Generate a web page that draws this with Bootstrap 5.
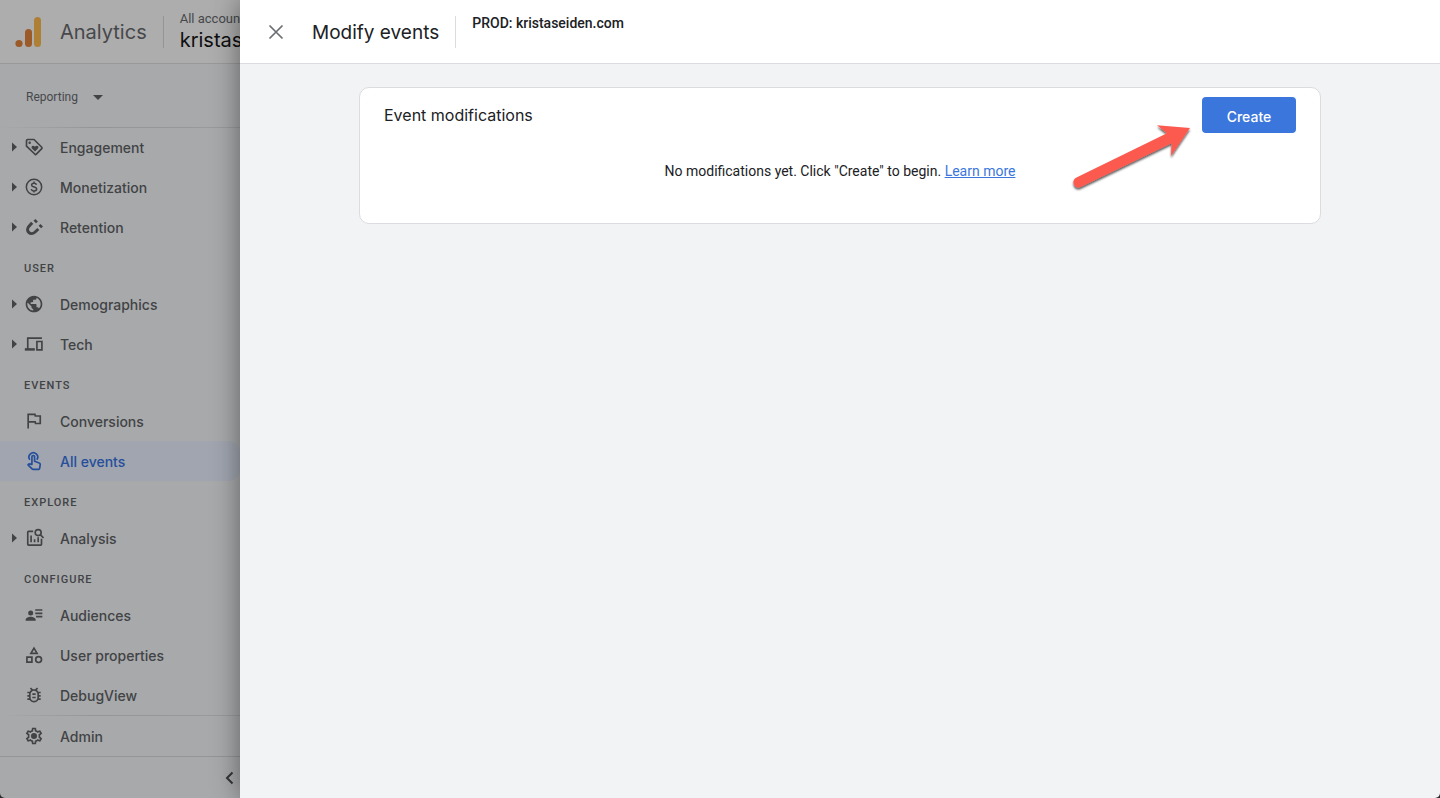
<!DOCTYPE html>
<html lang="en">
<head>
<meta charset="utf-8">
<meta name="viewport" content="width=device-width, initial-scale=1">
<title>Analytics - Modify events</title>
<link href="https://cdn.jsdelivr.net/npm/bootstrap@5.3.0/dist/css/bootstrap.min.css" rel="stylesheet">
<style>
  body { background: #2b2b2b; font-family: Roboto, "Liberation Sans", sans-serif; font-size: 14px; color: #202124; }
  .app-shell { min-height: 100vh; border-radius: 0 0 5px 5px; }
  .brand-font { font-family: Inter, Roboto, sans-serif; }

  /* dimmed navigation behind the drawer */
  .side-nav { width: 240px; background: #a8a9ab; color: #414345; }
  .side-top { height: 64px; background: #adadad; border-bottom: 1px solid #98999b; padding-left: 14px; }
  .product-name { font-size: 20px; line-height: 32px; color: #46484b; margin-left: 17px; }
  .top-rule { width: 1px; height: 32px; background: #939495; margin: 0 16px; }
  .acct-label { font-size: 13px; line-height: 16px; color: #46484b; }
  .acct-name { font-size: 20px; line-height: 26px; color: #0e0e0f; }
  .mode-switch { height: 63px; padding: 3px 26px 0; font-size: 12px; color: #46484b; background: none; border: 0; gap: 15px; }
  .fade-rule { height: 1px; background: linear-gradient(90deg, #a8a9ab, #949597 40%, #999a9c); }
  .nav-item-row { height: 40px; padding-left: 10px; font-size: 14px; font-weight: 500; color: #414345; text-decoration: none; }
  .nav-item-row:hover { color: #222; }
  .nav-item-row.is-current { background: #a0a5af; color: #254e9b; border-radius: 0 12px 12px 0; }
  .twisty { width: 14px; height: 10px; }
  .glyph { width: 20px; height: 20px; margin-right: 16px; }
  .group-title { height: 37px; padding: 14px 24px 0; font-family: Roboto, "Liberation Sans", sans-serif; font-size: 11px; line-height: 16px; font-weight: 500; letter-spacing: 1px; color: #414345; margin: 0; }
  .nav-end { border-top: 1px solid #949597; min-height: 41px; padding-right: 3px; }
  .plain-btn { border: 0; background: none; padding: 0; line-height: 0; color: inherit; }

  .drawer { background: #f1f3f4; box-shadow: 0 0 26px rgba(0,0,0,.45); min-width: 0; }
  .drawer-top { height: 64px; background: #fff; border-bottom: 1px solid #dadce0; padding-left: 26px; }
  .drawer-title { font-size: 19px; line-height: 28px; font-weight: 400; margin: 2px 0 0 26px; }
  .drawer-rule { width: 1px; height: 32px; background: #dadce0; margin: 0 16px; }
  .property-name { font-weight: 500; line-height: 20px; margin-bottom: 18px; }
  .drawer-body { padding: 23px 24px; }
  .panel { max-width: 962px; min-height: 137px; background: #fff; border: 1px solid #dadce0; border-radius: 10px; }
  .panel-head { padding: 9px 24px 0; }
  .panel-title { font-size: 16px; line-height: 24px; font-weight: 400; }
  .create-btn { width: 94px; height: 36px; background: #3b76dc; color: #fff; border-radius: 4px; font-size: 14px; font-weight: 500; padding: 2px 0 0; }
  .create-btn:hover { background: #2f66c6; color: #fff; }
  .learn-link { color: #3b76dc; }
  .pointer-arrow { right: 120px; top: 32px; width: 130px; height: 80px; pointer-events: none; }
</style>
</head>
<body>
<div class="app-shell d-flex overflow-hidden">
  <nav class="side-nav flex-shrink-0 d-flex flex-column overflow-hidden" aria-label="Analytics">
    <header class="side-top d-flex align-items-center flex-shrink-0 text-nowrap">
      <svg class="flex-shrink-0" width="29" height="32" viewBox="0 0 29 32" aria-hidden="true">
        <rect x="20" y="1" width="7" height="30" rx="3.5" fill="#ad8036"/>
        <rect x="11" y="13" width="7" height="18" rx="3.5" fill="#9c5a28"/>
        <circle cx="5" cy="27.500" r="3.600" fill="#9c5a28"/>
      </svg>
      <span class="product-name brand-font">Analytics</span>
      <span class="top-rule flex-shrink-0"></span>
      <div><div class="acct-label">All account</div><div class="acct-name brand-font">kristas</div></div>
    </header>
    <button class="mode-switch d-flex align-items-center flex-shrink-0" type="button">Reporting
      <svg width="10" height="5" viewBox="0 0 10 5" aria-hidden="true"><path d="M0 0h10L5 5z" fill="#414345"/></svg>
    </button>
    <div class="brand-font">
      <div class="position-relative"><div class="fade-rule position-absolute top-0 w-100"></div></div>
      <a href="#" class="nav-item-row d-flex align-items-center"><svg class="twisty" viewBox="0 0 14 10"><path d="M2 .5 7 5 2 9.500z" fill="currentColor"/></svg>
        <svg class="glyph" viewBox="0 0 24 24"><path d="M3 4.500V11l10.200 9.700q.8.700 1.600-.1l6.500-6.700q.8-.8 0-1.600L12 3H4.500Q3 3 3 4.500z" fill="none" stroke="currentColor" stroke-width="2" stroke-linejoin="round"/><circle cx="6.800" cy="6.800" r="1.500" fill="currentColor"/><path d="M13.200 17.500 9.600 13.800c-1.200-1.300-.4-3.300 1.400-3.300 1 0 1.700.5 2.200 1.200.5-.7 1.200-1.200 2.200-1.200 1.800 0 2.600 2 1.400 3.300z" fill="currentColor"/></svg>Engagement</a>
      <a href="#" class="nav-item-row d-flex align-items-center"><svg class="twisty" viewBox="0 0 14 10"><path d="M2 .5 7 5 2 9.500z" fill="currentColor"/></svg>
        <svg class="glyph" viewBox="0 0 24 24" fill="none" stroke="currentColor" stroke-width="1.800"><circle cx="12" cy="12" r="9.200"/><path d="M15 9.300c-.3-1.200-1.400-1.900-3-1.900s-2.900.8-2.900 2.100c0 1.500 1.300 2 3 2.400s3.100 1 3.100 2.600c0 1.400-1.300 2.200-3.100 2.200-1.900 0-3.100-.9-3.300-2.300M12 5.500v2.200M12 16.500v2.200"/></svg>Monetization</a>
      <a href="#" class="nav-item-row d-flex align-items-center"><svg class="twisty" viewBox="0 0 14 10"><path d="M2 .5 7 5 2 9.500z" fill="currentColor"/></svg>
        <svg class="glyph" viewBox="0 0 24 24"><path d="M9.800 7 6 11.200c-5 5.400 1.900 11.600 7 7.100l4.200-3.900" fill="none" stroke="currentColor" stroke-width="3.600"/><path d="m13.700 2.300 3 3-2.300 2.200-3-3zM19.800 8.300l3 3-2.300 2.200-3-3z" fill="currentColor"/></svg>Retention</a>
      <h2 class="group-title">USER</h2>
      <a href="#" class="nav-item-row d-flex align-items-center"><svg class="twisty" viewBox="0 0 14 10"><path d="M2 .5 7 5 2 9.500z" fill="currentColor"/></svg>
        <svg class="glyph" viewBox="0 0 24 24" fill="currentColor"><path d="M12 2C6.480 2 2 6.480 2 12s4.480 10 10 10 10-4.480 10-10S17.520 2 12 2zm-1 17.930c-3.950-.49-7-3.850-7-7.930 0-.62.08-1.210.21-1.790L9 15v1c0 1.100.9 2 2 2v1.930zm6.900-2.540c-.26-.81-1-1.390-1.900-1.390h-1v-3c0-.55-.45-1-1-1H8v-2h2c.55 0 1-.45 1-1V7h2c1.100 0 2-.9 2-2v-.41c2.930 1.190 5 4.060 5 7.410 0 2.080-.8 3.970-2.100 5.390z"/></svg>Demographics</a>
      <a href="#" class="nav-item-row d-flex align-items-center"><svg class="twisty" viewBox="0 0 14 10"><path d="M2 .5 7 5 2 9.500z" fill="currentColor"/></svg>
        <svg class="glyph" viewBox="0 0 24 24" fill="none" stroke="currentColor" stroke-width="2"><path d="M21.500 5H4.500v13"/><path d="M1 18.500h12" stroke-width="3"/><path d="M15.500 9h6v10h-6z"/></svg>Tech</a>
      <h2 class="group-title">EVENTS</h2>
      <a href="#" class="nav-item-row d-flex align-items-center"><span class="twisty"></span>
        <svg class="glyph" viewBox="0 0 24 24" fill="currentColor"><path d="M12.360 5l.4 2H18.500v7h-3.860l-.4-2H6V5h6.360M14 3H4v18h2v-7h6.600l.4 2h7.500V5h-6.100L14 3z"/></svg>Conversions</a>
      <a href="#" class="nav-item-row is-current d-flex align-items-center" aria-current="page"><span class="twisty"></span>
        <svg class="glyph" viewBox="0 0 24 24" fill="none" stroke="currentColor" stroke-width="2" stroke-linejoin="round"><path d="M7 10.500a5.200 5.200 0 1 1 8.400 0"/><path d="M9.500 16V7q0-1.600 1.600-1.600T12.700 7v5.300l5.500 2q1.500.6 1.300 2L18.700 21q-.1 1-1.200 1h-6.400q-.8 0-1.400-.6L4.800 16.600l1.200-1.100z"/></svg>All events</a>
      <h2 class="group-title">EXPLORE</h2>
      <a href="#" class="nav-item-row d-flex align-items-center"><svg class="twisty" viewBox="0 0 14 10"><path d="M2 .5 7 5 2 9.500z" fill="currentColor"/></svg>
        <svg class="glyph" viewBox="0 0 24 24" fill="none" stroke="currentColor" stroke-width="2"><path d="M11 4H5.500Q4.500 4 4.500 5v14.500q0 1 1 1h14.500q1 0 1-1V13"/><circle cx="17" cy="5.500" r="3.600"/><path d="m19.500 8 4 4M8.500 9v8M12.700 13.500V17M17 11v6"/></svg>Analysis</a>
      <h2 class="group-title">CONFIGURE</h2>
      <a href="#" class="nav-item-row d-flex align-items-center"><span class="twisty"></span>
        <svg class="glyph" viewBox="0 0 24 24" fill="currentColor"><circle cx="8" cy="9.500" r="3"/><path d="M2 19v-1.500c0-2.200 3.500-3.500 6-3.500s6 1.300 6 3.500V19zM13.500 5H22v2h-8.500zM13.500 9H22v2h-8.500zM14.500 13H22v2h-7.500z"/></svg>Audiences</a>
      <a href="#" class="nav-item-row d-flex align-items-center"><span class="twisty"></span>
        <svg class="glyph" viewBox="0 0 24 24" fill="none" stroke="currentColor" stroke-width="2"><path d="M12 3.800 15.700 10H8.300zM3.500 14.500h6v6h-6z"/><circle cx="17.500" cy="17.500" r="3.500"/></svg>User properties</a>
      <a href="#" class="nav-item-row d-flex align-items-center"><span class="twisty"></span>
        <svg class="glyph" viewBox="0 0 24 24" fill="currentColor"><path d="M20 8h-2.810c-.45-.78-1.070-1.450-1.820-1.960L17 4.410 15.590 3l-2.170 2.170C12.960 5.060 12.490 5 12 5s-.96.06-1.410.17L8.410 3 7 4.410l1.620 1.630C7.880 6.550 7.260 7.220 6.810 8H4v2h2.090c-.05.33-.09.66-.09 1v1H4v2h2v1c0 .34.04.67.09 1H4v2h2.810c1.040 1.790 2.970 3 5.190 3s4.150-1.210 5.190-3H20v-2h-2.090c.05-.33.09-.66.09-1v-1h2v-2h-2v-1c0-.34-.04-.67-.09-1H20V8zm-4 4v3c0 .22-.03.47-.07.7l-.1.65-.37.65c-.72 1.240-2.040 2-3.460 2s-2.740-.77-3.460-2l-.37-.64-.1-.65C8.030 15.480 8 15.230 8 15v-4c0-.23.03-.48.07-.7l.1-.65.37-.65c.3-.52.72-.97 1.210-1.310l.57-.39.74-.18c.31-.08.63-.12.94-.12.32 0 .63.04.95.12l.68.16.61.42c.5.34.91.78 1.210 1.310l.38.65.1.65c.04.22.07.47.07.69v1zm-6 2h4v2h-4zm0-4h4v2h-4z"/></svg>DebugView</a>
      <div class="fade-rule"></div>
      <a href="#" class="nav-item-row d-flex align-items-center"><span class="twisty"></span>
        <svg class="glyph" viewBox="0 0 24 24" fill="currentColor"><path d="M19.430 12.980c.04-.32.07-.64.07-.98 0-.34-.03-.66-.07-.98l2.110-1.650c.19-.15.24-.42.12-.64l-2-3.460c-.09-.16-.26-.25-.44-.25-.06 0-.12.01-.17.03l-2.490 1c-.52-.4-1.080-.73-1.690-.98l-.38-2.650C14.460 2.180 14.250 2 14 2h-4c-.25 0-.46.18-.49.42l-.38 2.650c-.61.25-1.170.59-1.690.98l-2.490-1c-.06-.02-.12-.03-.18-.03-.17 0-.34.09-.43.25l-2 3.460c-.13.22-.07.49.12.64l2.110 1.650c-.04.32-.07.65-.07.98 0 .33.03.66.07.98l-2.110 1.650c-.19.15-.24.42-.12.64l2 3.460c.09.16.26.25.44.25.06 0 .12-.01.17-.03l2.490-1c.52.4 1.080.73 1.690.98l.38 2.650c.03.24.24.42.49.42h4c.25 0 .46-.18.49-.42l.38-2.650c.61-.25 1.170-.59 1.690-.98l2.490 1c.06.02.12.03.18.03.17 0 .34-.09.43-.25l2-3.460c.12-.22.07-.49-.12-.64l-2.110-1.650zm-1.980-1.710c.04.31.05.52.05.73 0 .21-.02.43-.05.73l-.14 1.130.89.7 1.080.84-.7 1.210-1.270-.51-1.040-.42-.9.68c-.43.32-.84.56-1.250.73l-1.060.43-.16 1.130-.2 1.350h-1.400l-.19-1.350-.16-1.130-1.060-.43c-.43-.18-.83-.41-1.230-.71l-.91-.7-1.060.43-1.270.51-.7-1.210 1.080-.84.89-.7-.14-1.130c-.03-.31-.05-.54-.05-.74s.02-.43.05-.73l.14-1.130-.89-.7-1.080-.84.7-1.210 1.270.51 1.040.42.9-.68c.43-.32.84-.56 1.250-.73l1.060-.43.16-1.130.2-1.350h1.390l.19 1.350.16 1.130 1.060.43c.43.18.83.41 1.230.71l.91.7 1.060-.43 1.270-.51.7 1.210-1.070.85-.89.7.14 1.130z"/><circle cx="12" cy="12" r="3.600"/></svg>Admin</a>
    </div>
    <div class="nav-end flex-grow-1 d-flex justify-content-end align-items-center">
      <button class="plain-btn" type="button" aria-label="Collapse navigation"><svg width="14" height="14" viewBox="0 0 14 14"><path d="M9.500 1.500 4 7l5.500 5.500" fill="none" stroke="#333537" stroke-width="2"/></svg></button>
    </div>
  </nav>

  <main class="drawer flex-grow-1 position-relative">
    <header class="drawer-top d-flex align-items-center">
      <button class="plain-btn" type="button" aria-label="Close"><svg width="20" height="20" viewBox="0 0 20 20"><path d="m3.500 3.500 13 13m0-13-13 13" stroke="#6a6d71" stroke-width="1.700"/></svg></button>
      <h1 class="drawer-title brand-font">Modify events</h1>
      <span class="drawer-rule"></span>
      <span class="property-name">PROD: kristaseiden.com</span>
    </header>
    <div class="drawer-body">
      <section class="panel position-relative mx-auto">
        <div class="panel-head d-flex align-items-center justify-content-between">
          <h2 class="panel-title brand-font mb-0">Event modifications</h2>
          <button class="btn create-btn brand-font" type="button">Create</button>
        </div>
        <p class="text-center px-4 mt-4 pt-1 mb-4">No modifications yet. Click "Create" to begin. <a class="learn-link" href="#">Learn more</a></p>
        <svg class="pointer-arrow position-absolute" viewBox="0 0 130 80" aria-hidden="true">
          <defs><filter id="soft" x="-10%" y="-10%" width="120%" height="130%"><feDropShadow dx="0" dy="2" stdDeviation="1" flood-color="#000" flood-opacity=".65"/></filter></defs>
          <path d="M120 8 87 5.300l10 8-91 44.500c-5.500 3-1.500 11.500 4 9.500l91.500-44L101 36z" fill="#fd5a50" filter="url(#soft)"/>
        </svg>
      </section>
    </div>
  </main>
</div>
<script src="https://cdn.jsdelivr.net/npm/bootstrap@5.3.0/dist/js/bootstrap.bundle.min.js"></script>
</body>
</html>
